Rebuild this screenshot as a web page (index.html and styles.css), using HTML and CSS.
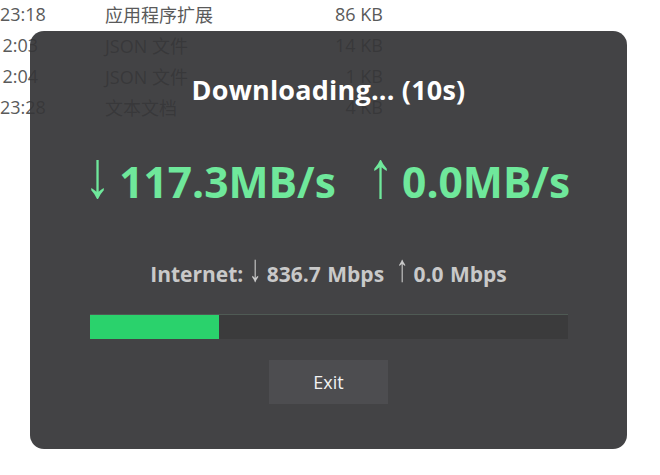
FILE: index.html
```html
<!DOCTYPE html>
<html>
<head>
<meta charset="utf-8">
<link rel="stylesheet" href="styles.css">
</head>
<body>
<div class="files">
  <div class="row"><span class="time">23:18</span><span class="type">应用程序扩展</span><span class="size">86 KB</span></div>
  <div class="row"><span class="time">2:03</span><span class="type">JSON 文件</span><span class="size">14 KB</span></div>
  <div class="row"><span class="time">2:04</span><span class="type">JSON 文件</span><span class="size">1 KB</span></div>
  <div class="row"><span class="time">23:28</span><span class="type">文本文档</span><span class="size">4 KB</span></div>
</div>
<div class="dialog">
  <h1 class="title">Downloading... (10s)</h1>
  <div class="speeds">
    <span class="speed"><span class="arrow">↓</span> 117.3MB/s</span>
    <span class="speed"><span class="arrow">↑</span> 0.0MB/s</span>
  </div>
  <div class="internet">Internet: <span class="sarrow">↓</span> 836.7 Mbps <span class="gap"></span><span class="sarrow">↑</span> 0.0 Mbps</div>
  <div class="track"><div class="fill" style="width:27%"></div></div>
  <button class="exit">Exit</button>
</div>
</body>
</html>
```

FILE: styles.css
```css
html, body {
  margin: 0;
  padding: 0;
  background: #ffffff;
  width: 660px;
  height: 475px;
  overflow: hidden;
  font-family: "Open Sans", "Noto Sans CJK SC", sans-serif;
}
.files {
  position: relative;
  color: #5a5a5a;
  font-size: 18px;
}
.row {
  display: flex;
  align-items: center;
  height: 31px;
}
.row:first-child { margin-top: -2px; }
.time {
  width: 38px;
  text-align: right;
  flex: none;
}
.type {
  margin-left: 67px;
  width: 180px;
  flex: none;
}
.size {
  width: 98px;
  text-align: right;
  flex: none;
}
.dialog {
  position: absolute;
  left: 30px;
  top: 31px;
  width: 597px;
  height: 418px;
  border-radius: 14px;
  background: rgba(54, 54, 56, 0.935);
  box-sizing: border-box;
  display: flex;
  flex-direction: column;
  align-items: center;
}
.title {
  margin: 41px 0 0;
  font-size: 27px;
  font-weight: 700;
  color: #ffffff;
  line-height: 36px;
  letter-spacing: 0.2px;
}
.speeds {
  margin-top: 46px;
  display: flex;
  gap: 34px;
  color: #6fe89b;
  font-size: 42.5px;
  font-weight: 700;
  line-height: 56px;
}
.arrow {
  display: inline-block;
  font-family: "Liberation Sans", sans-serif;
  font-weight: 400;
  transform: scale(1.25, 1.55);
  transform-origin: 50% 78%;
  will-change: transform;
}
.internet {
  margin-top: 48px;
  color: #c9c9c9;
  font-size: 21px;
  font-weight: 700;
  line-height: 28px;
  word-spacing: 1px;
}
.sarrow {
  display: inline-block;
  font-family: "Liberation Sans", sans-serif;
  font-weight: 400;
  transform: scale(1.2, 1.8);
  transform-origin: 50% 78%;
  will-change: transform;
  filter: grayscale(1);
}
.gap { display: inline-block; width: 6px; }
.track {
  margin-top: 25px;
  width: 478px;
  height: 25px;
  background: #3b3b3c;
  border-top: 1px solid #4f5a54;
  box-sizing: border-box;
}
.fill {
  height: 100%;
  background: #2ad26c;
}
.exit {
  margin-top: 21px;
  width: 119px;
  height: 44px;
  border: none;
  background: #4d4d50;
  color: #f2f2f2;
  font-family: "Open Sans", sans-serif;
  font-size: 18px;
  padding: 0;
}
```
